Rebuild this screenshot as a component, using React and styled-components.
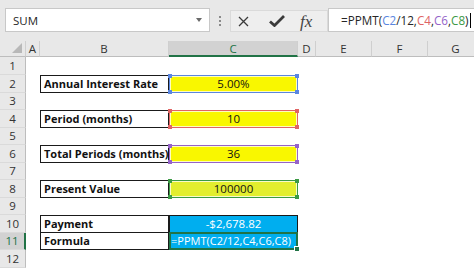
import React from "react"
import styled, { createGlobalStyle, css } from "styled-components"

const GlobalStyle = createGlobalStyle`
  html, body {
    margin: 0;
    padding: 0;
    background: #fff;
  }
  body {
    width: 474px;
    height: 269px;
    overflow: hidden;
    font-family: "Open Sans", sans-serif;
  }
`

const colors = {
  green: "#217346",
  blue: "#5a86e0",
  red: "#e06464",
  purple: "#9563c9",
  refGreen: "#3c9a45",
  yellow: "#f9f700",
  lime: "#e3ee2e",
  cyan: "#00aeef",
}

const Toolbar = styled.div`
  display: flex;
  align-items: flex-start;
  height: 41px;
  padding-top: 8px;
  box-sizing: border-box;
  background: #e8e8e8;
`

const NameBox = styled.div`
  position: relative;
  margin-left: 5px;
  width: 205px;
  height: 24px;
  box-sizing: border-box;
  background: #fff;
  border: 1px solid #c8c8c8;
  display: flex;
  align-items: center;
  padding-left: 7px;
  font-size: 11.5px;
  color: #262626;
`

const Caret = styled.span`
  position: absolute;
  right: 7px;
  top: 9px;
  width: 0;
  height: 0;
  border-left: 3px solid transparent;
  border-right: 3px solid transparent;
  border-top: 4px solid #6a6a6a;
`

const Dots = styled.div`
  width: 20px;
  display: flex;
  flex-direction: column;
  align-items: center;
  gap: 2px;
  padding-top: 8px;

  span {
    width: 2px;
    height: 2px;
    background: #8a8a8a;
  }
`

const ButtonBox = styled.div`
  margin-top: 2px;
  width: 98px;
  height: 22px;
  box-sizing: border-box;
  border: 1px solid #dadada;
  background: #eeeeee;
  display: flex;
  align-items: center;
  padding-left: 7px;
  gap: 14px;
`

const Fx = styled.span`
  font-family: "Liberation Serif", serif;
  font-style: italic;
  font-size: 17px;
  color: #444;
  line-height: 1;
  margin-left: 1px;
`

const FormulaInput = styled.div`
  flex: 1;
  height: 24px;
  box-sizing: border-box;
  background: #fff;
  border: 1px solid #c8c8c8;
  border-right: none;
  display: flex;
  align-items: center;
  padding-left: 12px;
  font-size: 11.7px;
  color: #262626;
  white-space: nowrap;
`

const Ref = styled.span`
  color: ${(p) => p.$color};
`

const TextCursor = styled.span`
  display: inline-block;
  width: 1px;
  height: 15px;
  background: #000;
  margin-left: 1px;
`

const Sheet = styled.div`
  display: grid;
  grid-template-columns: 26px 14px 129px 129px 18px 56px 56px 56px;
  grid-template-rows: 16px 18px repeat(11, 17.5px);
  overflow: hidden;
  width: 474px;
`

const Corner = styled.div`
  position: relative;
  background: #e8e8e8;
  border-right: 1px solid #cfcfcf;
  border-bottom: 1px solid #bdbdbd;
  box-sizing: border-box;

  &::after {
    content: "";
    position: absolute;
    right: 3px;
    bottom: 3px;
    width: 0;
    height: 0;
    border-left: 10px solid transparent;
    border-bottom: 10px solid #b8b8b8;
  }
`

const ColHeader = styled.div`
  display: flex;
  align-items: center;
  justify-content: center;
  box-sizing: border-box;
  font-size: 11.5px;
  color: #333;
  background: #e8e8e8;
  border-right: 1px solid #cfcfcf;
  border-bottom: 1px solid #bdbdbd;

  ${(p) =>
    p.$active &&
    css`
      background: #d2d2d2;
      color: ${colors.green};
      border-bottom: 2px solid ${colors.green};
    `}
`

const RowHeader = styled.div`
  display: flex;
  align-items: center;
  justify-content: center;
  box-sizing: border-box;
  font-size: 11.5px;
  color: #333;
  background: #e8e8e8;
  border-right: 1px solid #bdbdbd;
  border-bottom: 1px solid #dadada;

  ${(p) =>
    p.$active &&
    css`
      background: #d2d2d2;
      color: ${colors.green};
      border-right: 2px solid ${colors.green};
    `}
`

const Cell = styled.div`
  position: relative;
  display: flex;
  align-items: center;
  justify-content: ${(p) => (p.$align === "center" ? "center" : "flex-start")};
  box-sizing: border-box;
  padding: 0 ${(p) => (p.$tight ? "1px" : "3px")};
  font-size: ${(p) => (p.$bold || p.$tight ? "11px" : "11.5px")};
  white-space: nowrap;
  color: ${(p) => p.$color || "#111"};
  font-weight: ${(p) => (p.$bold ? 700 : 400)};
  background: ${(p) => p.$fill || "transparent"};

  ${(p) =>
    p.$box &&
    css`
      border: 1px solid #1a1a1a;
    `}
  ${(p) =>
    p.$noTop &&
    css`
      border-top: none;
    `}
`

const RefFrame = styled.div`
  position: absolute;
  inset: 0;
  border: 1px solid ${(p) => p.$color};
  box-shadow: inset 0 0 0 1px rgba(255, 255, 255, 0.75);
  pointer-events: none;
`

const Handle = styled.span`
  position: absolute;
  width: 4px;
  height: 4px;
  background: ${(p) => p.$color};
  ${(p) => (p.$top ? "top: -2px;" : "bottom: -2px;")}
  ${(p) => (p.$left ? "left: -2px;" : "right: -2px;")}
`

const SelFrame = styled.div`
  position: absolute;
  inset: -1px;
  border: 2px solid ${colors.green};
  pointer-events: none;

  &::after {
    content: "";
    position: absolute;
    right: -4px;
    bottom: -4px;
    width: 4px;
    height: 4px;
    background: ${colors.green};
    border: 1px solid #fff;
  }
`

const FormulaText = styled.span`
  position: relative;
  z-index: 1;
`

const RefBox = ({ color }) => (
  <RefFrame $color={color}>
    <Handle $color={color} $top $left />
    <Handle $color={color} $top />
    <Handle $color={color} $left />
    <Handle $color={color} />
  </RefFrame>
)

const columns = ["A", "B", "C", "D", "E", "F", "G"]

const rows = {
  2: { label: "Annual Interest Rate", value: "5.00%", fill: colors.yellow, ref: colors.blue },
  4: { label: "Period (months)", value: "10", fill: colors.yellow, ref: colors.red },
  6: { label: "Total Periods (months)", value: "36", fill: colors.yellow, ref: colors.purple },
  8: { label: "Present Value", value: "100000", fill: colors.lime, ref: colors.refGreen },
}

const renderRow = (n) => {
  const input = rows[n]
  const cells = []
  cells.push(<Cell key="A" />)

  if (input) {
    cells.push(
      <Cell key="B" $box $bold>
        {input.label}
      </Cell>
    )
    cells.push(
      <Cell key="C" $fill={input.fill} $align="center">
        {input.value}
        <RefBox color={input.ref} />
      </Cell>
    )
  } else if (n === 10) {
    cells.push(
      <Cell key="B" $box $bold>
        Payment
      </Cell>
    )
    cells.push(
      <Cell key="C" $box $fill={colors.cyan} $color="#fff" $align="center">
        -$2,678.82
      </Cell>
    )
  } else if (n === 11) {
    cells.push(
      <Cell key="B" $box $noTop $bold>
        Formula
      </Cell>
    )
    cells.push(
      <Cell key="C" $box $noTop $tight $fill={colors.cyan} $color="#fff">
        <SelFrame />
        <FormulaText>=PPMT(C2/12,C4,C6,C8)</FormulaText>
      </Cell>
    )
  } else {
    cells.push(<Cell key="B" />)
    cells.push(<Cell key="C" />)
  }

  cells.push(<Cell key="D" />, <Cell key="E" />, <Cell key="F" />, <Cell key="G" />)

  return (
    <React.Fragment key={n}>
      <RowHeader $active={n === 11}>{n}</RowHeader>
      {cells}
    </React.Fragment>
  )
}

const App = () => {
  return (
    <>
      <GlobalStyle />
      <Toolbar>
        <NameBox>
          SUM
          <Caret />
        </NameBox>
        <Dots>
          <span />
          <span />
          <span />
        </Dots>
        <ButtonBox>
          <svg width="11" height="11" viewBox="0 0 11 11">
            <path d="M1 1 L10 10 M10 1 L1 10" stroke="#3a3a3a" strokeWidth="1.3" fill="none" />
          </svg>
          <svg width="16" height="12" viewBox="0 0 16 12" style={{ marginLeft: 6 }}>
            <path d="M1 6.5 L5.5 10.5 L15 1" stroke="#3a3a3a" strokeWidth="2.8" fill="none" />
          </svg>
          <Fx>fx</Fx>
        </ButtonBox>
        <FormulaInput>
          =PPMT(<Ref $color={colors.blue}>C2</Ref>/12,<Ref $color={colors.red}>C4</Ref>,
          <Ref $color={colors.purple}>C6</Ref>,<Ref $color={colors.refGreen}>C8</Ref>)
          <TextCursor />
        </FormulaInput>
      </Toolbar>
      <Sheet>
        <Corner />
        {columns.map((c) => (
          <ColHeader key={c} $active={c === "C"}>
            {c}
          </ColHeader>
        ))}
        {Array.from({ length: 12 }, (_, i) => renderRow(i + 1))}
      </Sheet>
    </>
  )
}

export default App
